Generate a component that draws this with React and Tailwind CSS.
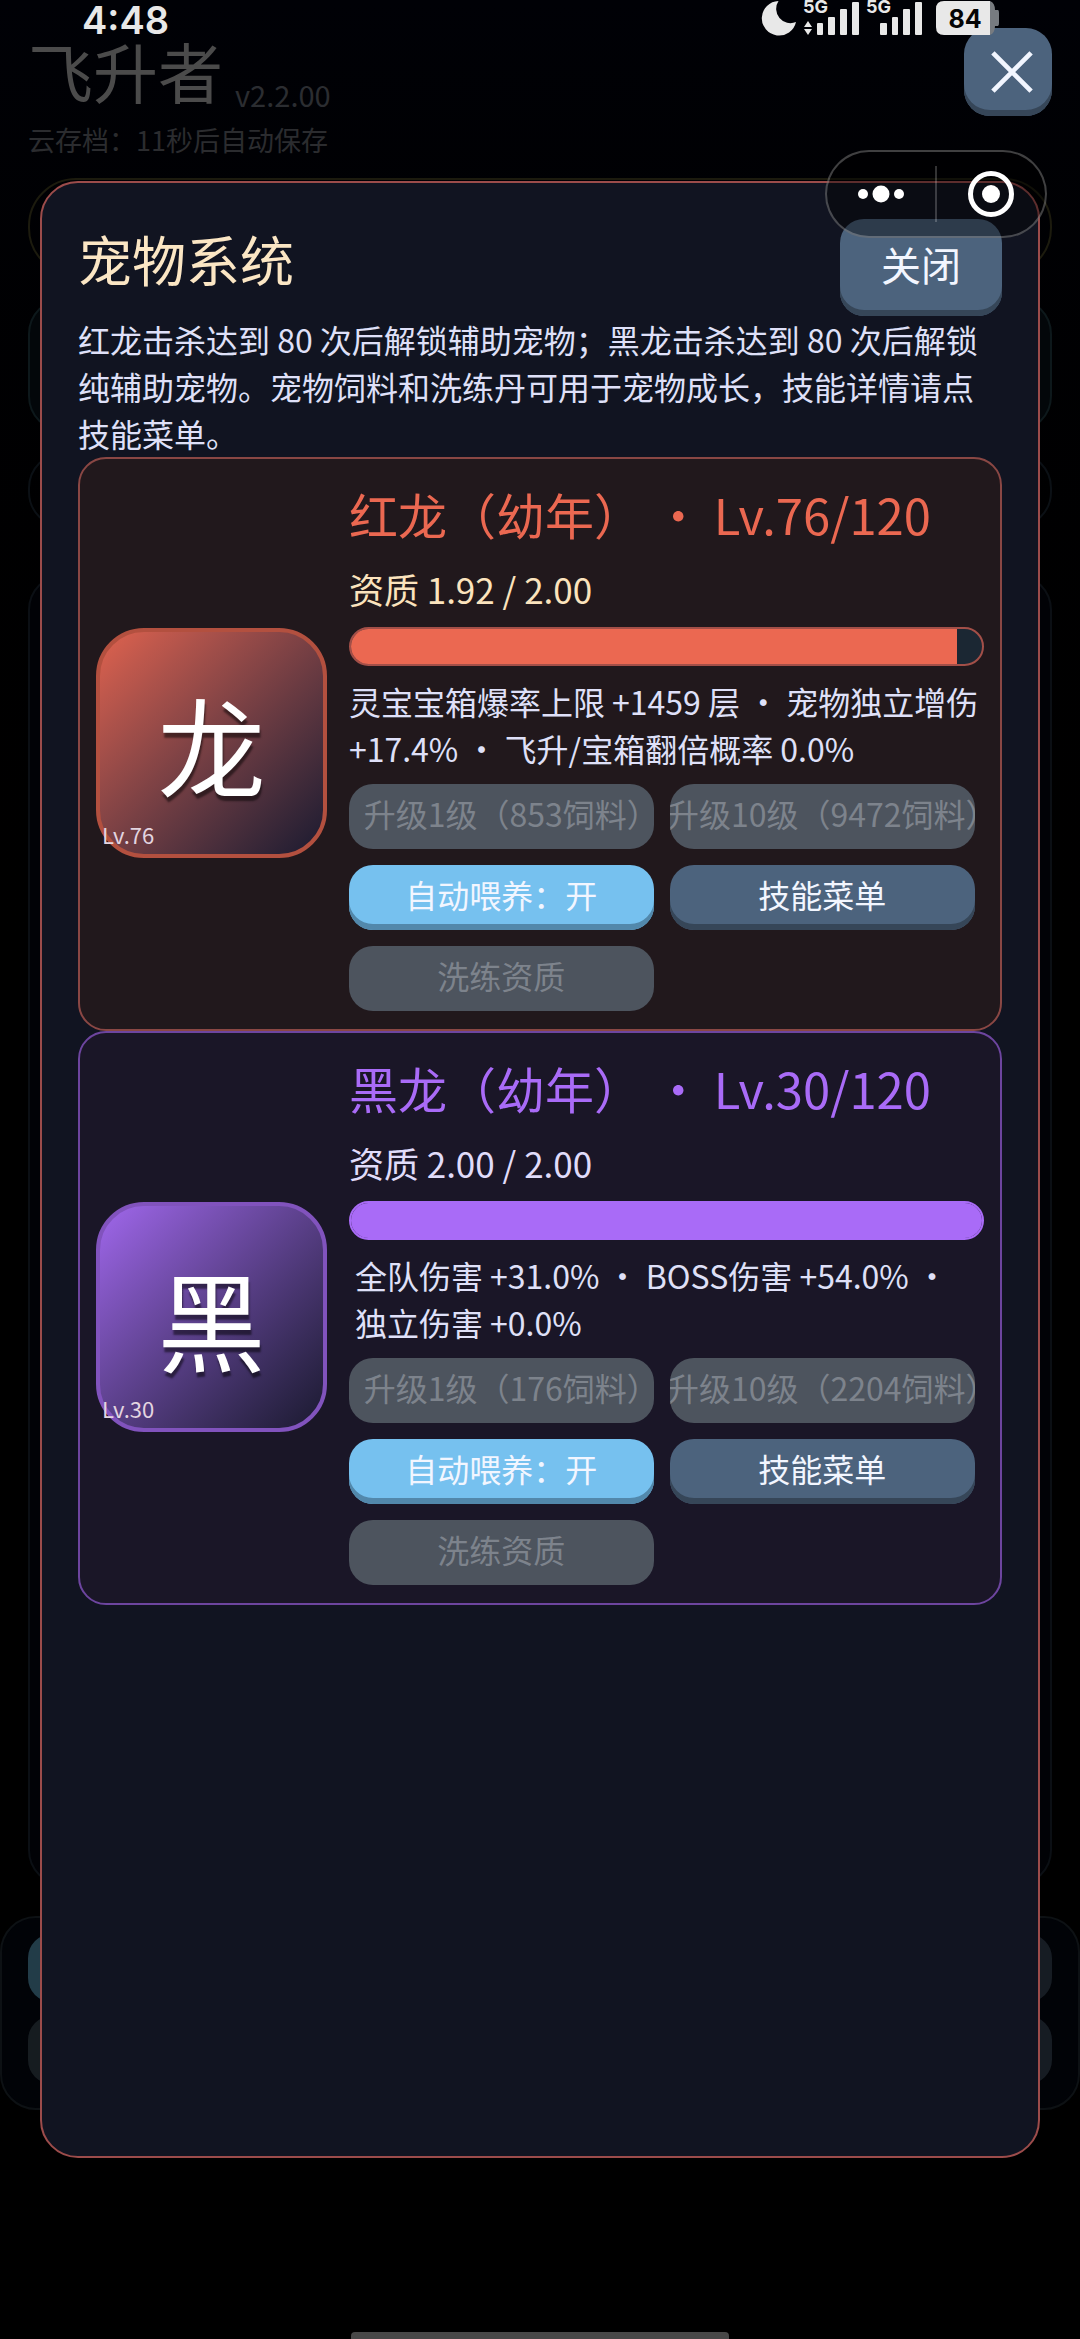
import React, {useState} from 'react';
import clsx from "clsx";

const pets = [
    {
        id: "red",
        name: "红龙（幼年）",
        glyph: "龙",
        level: 76,
        talent: "1.92",
        percent: 96,
        stats: "灵宝宝箱爆率上限 +1459 层 • 宠物独立增伤 +17.4% • 飞升/宝箱翻倍概率 0.0%",
        upgradeOne: "853",
        upgradeTen: "9472",
        card: "border-[#8a4744] bg-[#21181c]",
        title: "text-[#eb6851]",
        talentStyle: "text-[#fbe3bd]",
        avatar: "border-[#b3503f] from-[#df624e] to-[#1b1a30]",
        bar: "border-[#a34f48]",
        fill: "bg-[#eb6851]",
        statsStyle: ""
    },
    {
        id: "black",
        name: "黑龙（幼年）",
        glyph: "黑",
        level: 30,
        talent: "2.00",
        percent: 100,
        stats: "全队伤害 +31.0% • BOSS伤害 +54.0% • 独立伤害 +0.0%",
        upgradeOne: "176",
        upgradeTen: "2204",
        card: "border-[#6d459f] bg-[#1a1627]",
        title: "text-[#a96bf7]",
        talentStyle: "text-[#e0dcfa]",
        avatar: "border-[#8153bd] from-[#a067ec] to-[#1b1a30]",
        bar: "border-[#a96bf7]",
        fill: "bg-[#a96bf7]",
        statsStyle: "px-1.5"
    }
];

const buttonColors = {
    steel: "bg-[#4c637d] text-[#f2f6ff] shadow-[inset_0_-6px_0_#364658]",
    sky: "bg-[#76c1ef] text-[#f2f6ff] shadow-[inset_0_-6px_0_#5288ab]",
    off: "bg-[#4d545e] text-[#7d838c]"
};

const GameButton = ({color, className, children, ...rest}) => (
    <button type="button"
            className={clsx("flex items-center justify-center overflow-hidden whitespace-nowrap pb-2", buttonColors[color], className)}
            {...rest}>
        {children}
    </button>
);

const StatusBar = () => (
    <div className="absolute inset-x-0 top-0 z-20 flex items-start justify-between pl-[82px] pr-20 text-[#e8e8e8]">
        <div className="font-['Inter',sans-serif] text-[38px] font-semibold leading-10">4:48</div>
        <svg className="h-9 w-60" viewBox="760 0 240 36" fill="#e8e8e8">
            <path d="M778.5 1A17.3 17.3 0 1 0 796 22A14.3 14.3 0 0 1 778.5 1Z"/>
            <g fontFamily="Inter, sans-serif" fontSize="18" fontWeight="700">
                <text x="803" y="13">5G</text>
                <text x="866" y="13">5G</text>
            </g>
            <path d="M804 27l4-6 4 6zM804 29h8l-4 6z"/>
            <rect x="817" y="23" width="6" height="12" rx="1"/>
            <rect x="828" y="17" width="7" height="18" rx="1"/>
            <rect x="840" y="9" width="7" height="26" rx="1"/>
            <rect x="852" y="2" width="7" height="33" rx="1"/>
            <rect x="880" y="23" width="7" height="12" rx="1"/>
            <rect x="892" y="17" width="6" height="18" rx="1"/>
            <rect x="903" y="9" width="7" height="26" rx="1"/>
            <rect x="915" y="2" width="7" height="33" rx="1"/>
            <path d="M990 1q5 2 5 9h3q1 0 1 3v10q0 3-1 3h-3q0 7-5 9z" fill="#777b80"/>
            <path d="M990 1v34h-46q-8 0-8-8V9q0-8 8-8z"/>
            <text x="965" y="28" fill="#050505" textAnchor="middle" fontFamily="Inter, sans-serif" fontSize="25" fontWeight="700">84</text>
        </svg>
    </div>
);

const Capsule = () => (
    <div className="absolute right-[33px] top-[150px] z-20 flex h-[88px] w-[222px] items-center rounded-full border-2 border-white/25 bg-black/40">
        <button type="button" aria-label="更多" className="flex h-full flex-1 items-center justify-center">
            <svg className="h-5 w-12" viewBox="0 0 48 20" fill="#fff">
                <circle cx="6" cy="10" r="5"/>
                <circle cx="24" cy="10" r="8.5"/>
                <circle cx="42" cy="10" r="5"/>
            </svg>
        </button>
        <div className="h-14 w-0.5 bg-white/20"/>
        <button type="button" aria-label="退出" className="flex h-full flex-1 items-center justify-center">
            <svg className="h-12 w-12" viewBox="0 0 48 48">
                <circle cx="24" cy="24" r="20.5" fill="none" stroke="#fff" strokeWidth="5"/>
                <circle cx="24" cy="24" r="9" fill="#fff"/>
            </svg>
        </button>
    </div>
);

// Dimmed game screen that shows around the edges of the dialog
const GameScreen = () => (
    <div className="flex min-h-[2339px] flex-col bg-linear-to-b from-[#000106] via-black to-black">
        <header className="flex h-[178px] items-start justify-between px-7 pt-7">
            <div>
                <div className="flex items-end gap-3">
                    <h1 className="text-[65px] leading-[84px] text-[#4b4b4b]">飞升者</h1>
                    <span className="text-[29px] leading-9 text-[#2b2d31]">v2.2.00</span>
                </div>
                <p className="mt-2 text-[27px] leading-10 text-[#2b2c2f]">云存档：11秒后自动保存</p>
            </div>
            <button type="button" aria-label="关闭游戏"
                    className="flex h-[88px] w-[88px] items-center justify-center rounded-[26px] bg-[#4c637d] pl-2 shadow-[inset_0_-6px_0_#364658]">
                <svg className="h-[42px] w-[42px]" viewBox="0 0 44 44" stroke="#f2f6ff" strokeWidth="5">
                    <path d="M2 2l40 40M42 2l-40 40"/>
                </svg>
            </button>
        </header>
        <div className="mx-7 flex flex-col">
            <div className="h-[98px] rounded-[48px] border-2 border-[#1c1b0e]"/>
            <div className="mt-[22px] h-[134px] rounded-[36px] border-2 border-[#0d181b] bg-[#03070a]"/>
            <div className="mt-5 h-[76px] rounded-[36px] border-2 border-[#0b1015]"/>
            <div className="mt-[46px] h-[1312px] rounded-[36px] border-2 border-[#0b0f14] bg-[#010206]"/>
        </div>
        <nav className="mt-[30px] grid grid-cols-2 gap-y-3.5 rounded-[36px] border-2 border-[#0d1114] bg-[#010307] px-[26px] pb-6 pt-4">
            <div className="h-[68px] rounded-l-[24px] bg-[#223c48]"/>
            <div className="h-[68px] rounded-r-[24px] bg-[#161c23]"/>
            <div className="h-[68px] rounded-l-[24px] bg-[#161c20]"/>
            <div className="h-[68px] rounded-r-[24px] bg-[#161c23]"/>
        </nav>
    </div>
);

const PetCard = ({pet}) => {
    const [autoFeed, setAutoFeed] = useState(true);
    const small = "h-[65px] w-[48%] rounded-3xl text-[32px]";

    return (
        <section className={clsx("flex items-center gap-[22px] rounded-[28px] border-2 px-4 pb-[18px] pt-4", pet.card)}>
            <div className={clsx("relative flex aspect-square w-[26%] shrink-0 items-center justify-center rounded-[48px] border-4 bg-linear-135", pet.avatar)}>
                <span className="text-[108px] leading-none text-white [text-shadow:1px_5px_2px_rgba(0,0,0,0.5)]">{pet.glyph}</span>
                <span className="absolute bottom-1.5 left-0.5 text-[22px] leading-7 text-[#e3d5e0]">Lv.{pet.level}</span>
            </div>
            <div className="flex min-w-0 flex-1 flex-col gap-3">
                <h3 className={clsx("whitespace-nowrap text-[49px] leading-[78px]", pet.title)}>{pet.name} • Lv.{pet.level}/120</h3>
                <p className={clsx("pb-0.5 text-[35px] leading-[48px]", pet.talentStyle)}>资质 {pet.talent} / 2.00</p>
                <div className={clsx("h-[39px] overflow-hidden rounded-full border-2 bg-[#1b2733]", pet.bar)}>
                    <div className={clsx("h-full", pet.fill)} style={{width: pet.percent + "%"}}/>
                </div>
                <p className={clsx("text-[32px] leading-[47px] text-[#dfe0f8]", pet.statsStyle)}>{pet.stats}</p>
                <div className="flex flex-wrap gap-4">
                    <GameButton color="off" className={clsx(small, "pl-5")} disabled>升级1级（{pet.upgradeOne}饲料）</GameButton>
                    <GameButton color="off" className={clsx(small, "pl-5")} disabled>升级10级（{pet.upgradeTen}饲料）</GameButton>
                    <GameButton color={autoFeed ? "sky" : "steel"} className={small} onClick={() => setAutoFeed(!autoFeed)}>
                        自动喂养：{autoFeed ? "开" : "关"}
                    </GameButton>
                    <GameButton color="steel" className={small}>技能菜单</GameButton>
                    <GameButton color="off" className={small} disabled>洗练资质</GameButton>
                </div>
            </div>
        </section>
    );
}

const App = () => {
    return (
        <div lang="zh-CN" className="relative bg-black font-['Noto_Sans_CJK_SC',sans-serif]">
            <GameScreen/>
            <StatusBar/>
            <div role="dialog" aria-labelledby="pets-title"
                 className="absolute inset-x-10 bottom-[181px] top-[181px] z-10 rounded-[38px] border-2 border-[#9c4c4b] bg-[#111421] p-9">
                <div className="flex items-start justify-between">
                    <h2 id="pets-title" className="text-[54px] leading-[80px] text-[#fbe6c4]">宠物系统</h2>
                    <GameButton color="steel" className="h-[97px] w-[162px] rounded-3xl text-[40px]">关闭</GameButton>
                </div>
                <p className="text-[32px] leading-[47px] text-[#dfe0f8]">
                    红龙击杀达到 80 次后解锁辅助宠物；黑龙击杀达到 80 次后解锁纯辅助宠物。宠物饲料和洗练丹可用于宠物成长，技能详情请点技能菜单。
                </p>
                {pets.map((pet) => <PetCard key={pet.id} pet={pet}/>)}
            </div>
            <Capsule/>
            <div className="absolute inset-x-0 bottom-0 z-20 flex justify-center">
                <div className="h-[7px] w-[35%] rounded-t bg-[#484848]"/>
            </div>
        </div>
    );
}

export default App;
